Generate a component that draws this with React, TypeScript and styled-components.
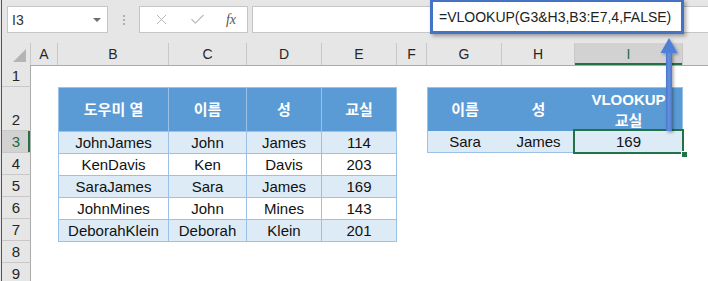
import styled, { createGlobalStyle } from "styled-components";
import { X, Check } from "lucide-react";

const GlobalStyle = createGlobalStyle`
  html, body {
    margin: 0;
    padding: 0;
    background: #ffffff;
    overflow: hidden;
  }
`;

const Window = styled.div`
  position: relative;
  width: 708px;
  height: 281px;
  box-sizing: border-box;
  border-left: 1px solid #e6e6e6;
  font-family: "Liberation Sans", "Noto Sans CJK KR", sans-serif;
  overflow: hidden;
  background: #ffffff;
`;

const Frame = styled.div`
  border-left: 1px solid #217346;
  height: 100%;
`;

const Toolbar = styled.div`
  height: 43px;
  box-sizing: border-box;
  background: #e6e6e6;
  display: flex;
  align-items: flex-start;
  padding: 6px 0 0 5px;
`;

const NameBox = styled.div`
  width: 101px;
  height: 27px;
  box-sizing: border-box;
  background: #fff;
  border: 1px solid #c6c6c6;
  display: flex;
  align-items: center;
  justify-content: space-between;
  padding: 0 6px 0 4px;
  font-size: 14px;
  color: #333;
`;

const Caret = styled.span`
  width: 0;
  height: 0;
  border-left: 4px solid transparent;
  border-right: 4px solid transparent;
  border-top: 4px solid #6e6e6e;
`;

const Grip = styled.div`
  width: 31px;
  height: 27px;
  display: flex;
  flex-direction: column;
  align-items: center;
  justify-content: center;
  gap: 2px;
  span {
    width: 2px;
    height: 2px;
    background: #b0b0b0;
  }
`;

const FxBox = styled.div`
  width: 109px;
  height: 27px;
  box-sizing: border-box;
  background: #fff;
  border: 1px solid #c6c6c6;
  display: flex;
  align-items: center;
  justify-content: space-between;
  padding: 0 11px 0 13px;
  color: #b8b8b8;
`;

const Fx = styled.span`
  font-family: "Liberation Serif", serif;
  font-style: italic;
  font-size: 14px;
  color: #555;
`;

const FormulaInput = styled.div`
  flex: 1;
  height: 27px;
  margin-left: 4px;
  box-sizing: border-box;
  background: #fff;
  border: 1px solid #c6c6c6;
  border-right: none;
`;

// A..I widths as in the sheet, the next column runs off the right edge
const cols = "29px 27px 111px 78px 75px 75px 30px 75px 73px 108px 64px";

const HeaderRow = styled.div`
  display: grid;
  grid-template-columns: ${cols};
  height: 22px;
  background: #e6e6e6;
  border-bottom: 1px solid #ababab;
  box-sizing: content-box;
`;

const Corner = styled.div`
  position: relative;
  border-right: 1px solid #c8c8c8;
  &::after {
    content: "";
    position: absolute;
    right: 4px;
    bottom: 3px;
    width: 0;
    height: 0;
    border-left: 13px solid transparent;
    border-bottom: 13px solid #b4b4b4;
  }
`;

const ColHead = styled.div<{ $active?: boolean }>`
  display: flex;
  align-items: center;
  justify-content: center;
  font-size: 14px;
  color: ${(p) => (p.$active ? "#1e6b41" : "#262626")};
  background: ${(p) => (p.$active ? "#d2d2d2" : "transparent")};
  border-right: 1px solid #c8c8c8;
  box-shadow: ${(p) => (p.$active ? "inset 0 -2px 0 #217346" : "none")};
  box-sizing: border-box;
`;

const Body = styled.div`
  display: grid;
  grid-template-columns: ${cols};
  grid-template-rows: 22px 44px repeat(7, 22px);
  margin-top: -1px;
`;

const RowHead = styled.div<{ $row: number; $active?: boolean }>`
  grid-column: 1;
  grid-row: ${(p) => p.$row};
  display: flex;
  align-items: flex-end;
  justify-content: center;
  padding-bottom: 2px;
  box-sizing: border-box;
  font-size: 15px;
  color: ${(p) => (p.$active ? "#1e6b41" : "#262626")};
  background: ${(p) => (p.$active ? "#d2d2d2" : "#e6e6e6")};
  border-bottom: 1px solid #c8c8c8;
  border-right: 1px solid #ababab;
  box-shadow: ${(p) => (p.$active ? "inset -2px 0 0 #217346" : "none")};
`;

const Table = styled.div<{ $col: string; $row: string; $template: string; $rows: string; $lined?: boolean }>`
  grid-column: ${(p) => p.$col};
  grid-row: ${(p) => p.$row};
  display: grid;
  grid-template-columns: ${(p) => p.$template};
  grid-template-rows: ${(p) => p.$rows};
  gap: ${(p) => (p.$lined ? "1px" : "0")};
  padding: 1px;
  background: #9bc2e6;
  align-self: start;
`;

const HeadCell = styled.div`
  background: #5b9bd5;
  color: #fff;
  font-weight: bold;
  font-size: 15px;
  line-height: 21px;
  display: flex;
  align-items: center;
  justify-content: center;
  text-align: center;
`;

const Cell = styled.div<{ $band: boolean; $selected?: boolean }>`
  position: relative;
  background: ${(p) => (p.$band ? "#ddebf7" : "#ffffff")};
  font-size: 15px;
  color: #111;
  display: flex;
  align-items: center;
  justify-content: center;
  outline: ${(p) => (p.$selected ? "2px solid #217346" : "none")};
  outline-offset: 0px;
  z-index: ${(p) => (p.$selected ? 1 : 0)};
  &::after {
    content: "";
    display: ${(p) => (p.$selected ? "block" : "none")};
    position: absolute;
    right: -5px;
    bottom: -5px;
    width: 5px;
    height: 5px;
    background: #217346;
    border: 1px solid #fff;
    border-right: none;
    border-bottom: none;
  }
`;

const Callout = styled.div`
  position: absolute;
  left: 429px;
  top: -1px;
  width: 254px;
  height: 35px;
  box-sizing: border-box;
  border: 3px solid #4472c4;
  background: #fff;
  box-shadow: 2px 2px 4px rgba(0, 0, 0, 0.35);
  display: flex;
  align-items: center;
  padding-left: 6px;
  font-size: 14px;
  color: #222;
  z-index: 5;
`;

const Arrow = styled.svg`
  position: absolute;
  left: 652px;
  top: 34px;
  z-index: 4;
  overflow: visible;
`;

const helper = [
  ["JohnJames", "John", "James", "114"],
  ["KenDavis", "Ken", "Davis", "203"],
  ["SaraJames", "Sara", "James", "169"],
  ["JohnMines", "John", "Mines", "143"],
  ["DeborahKlein", "Deborah", "Klein", "201"],
];

// the last header is the next column, whose letter falls past the window edge
const letters = ["A", "B", "C", "D", "E", "F", "G", "H", "I", ""];

export default function App() {
  return (
    <Window>
      <GlobalStyle />
      <Frame>
        <Toolbar>
          <NameBox>
            <span>I3</span>
            <Caret />
          </NameBox>
          <Grip>
            <span />
            <span />
            <span />
          </Grip>
          <FxBox>
            <X size={17} strokeWidth={1.4} />
            <Check size={17} strokeWidth={1.6} />
            <Fx>fx</Fx>
          </FxBox>
          <FormulaInput />
        </Toolbar>

        <HeaderRow>
          <Corner />
          {letters.map((l, i) => (
            <ColHead key={i} $active={l === "I"}>
              {l}
            </ColHead>
          ))}
        </HeaderRow>

        <Body>
          {[1, 2, 3, 4, 5, 6, 7, 8, 9].map((n) => (
            <RowHead key={n} $row={n} $active={n === 3}>
              {n}
            </RowHead>
          ))}

          <Table
            $col="3 / 7"
            $row="2 / 8"
            $template="109px 77px 74px 74px"
            $rows="43px repeat(5, 21px)"
            $lined
          >
            <HeadCell>도우미 열</HeadCell>
            <HeadCell>이름</HeadCell>
            <HeadCell>성</HeadCell>
            <HeadCell>교실</HeadCell>
            {helper.map((row, i) =>
              row.map((v, j) => (
                <Cell key={`${i}-${j}`} $band={i % 2 === 0}>
                  {v}
                </Cell>
              ))
            )}
          </Table>

          <Table
            $col="8 / 11"
            $row="2 / 4"
            $template="74px 73px 107px"
            $rows="43px 21px"
          >
            <HeadCell>이름</HeadCell>
            <HeadCell>성</HeadCell>
            <HeadCell>
              VLOOKUP
              <br />
              교실
            </HeadCell>
            <Cell $band>Sara</Cell>
            <Cell $band>James</Cell>
            <Cell $band $selected>
              169
            </Cell>
          </Table>
        </Body>
      </Frame>

      <Callout>=VLOOKUP(G3&amp;H3,B3:E7,4,FALSE)</Callout>

      <Arrow width="32" height="100" viewBox="0 0 32 100">
        <defs>
          <filter id="sh" x="-50%" y="-10%" width="200%" height="130%">
            <feDropShadow dx="1.5" dy="1.5" stdDeviation="1.5" floodColor="#000" floodOpacity="0.35" />
          </filter>
          <linearGradient id="shaft" x1="0" x2="1" y1="0" y2="0">
            <stop offset="0" stopColor="#4a78cf" />
            <stop offset="0.5" stopColor="#6790de" />
            <stop offset="1" stopColor="#4a78cf" />
          </linearGradient>
        </defs>
        <g filter="url(#sh)">
          <rect x="13" y="17" width="6" height="80" fill="url(#shaft)" />
          <polygon points="16,4 24.5,19 7.5,19" fill="#4f7fd6" />
        </g>
      </Arrow>
    </Window>
  );
}
